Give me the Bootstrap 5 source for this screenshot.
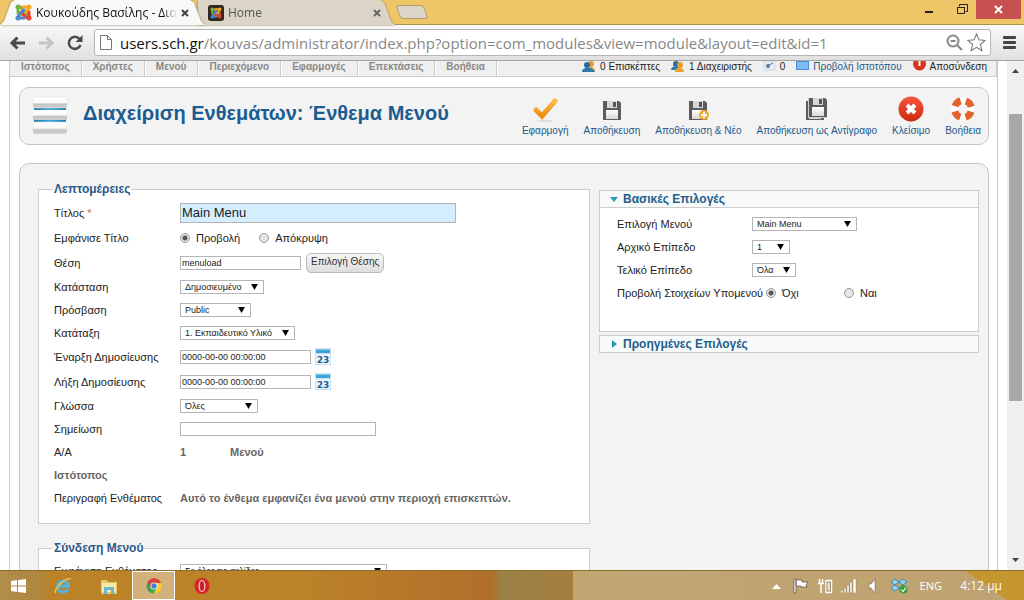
<!DOCTYPE html>
<html lang="el">
<head>
<meta charset="utf-8">
<meta name="viewport" content="width=device-width, initial-scale=1">
<title>Κουκούδης Βασίλης - Διαχείριση</title>
<link href="https://cdn.jsdelivr.net/npm/bootstrap@5.3.0/dist/css/bootstrap.min.css" rel="stylesheet">
<style>
body{font:11px/14px "Liberation Sans",Arial,sans-serif;color:#222;background:#fff}
svg{display:block;flex:none}
a{text-decoration:none;color:#1c5a8a}
.ui{font-family:"Open Sans","Noto Sans",sans-serif}
/* browser frame */
.tabstrip{background:#efc667;height:25px;border-bottom:1px solid #b0924f}
.tab{height:25px;filter:drop-shadow(0 0 1px #8a7a55)}
.tab>div{height:25px;font-size:12px;line-height:24px}
.tab-on{z-index:2}
.tab-on>div{background:#f9f9f9;width:205px;clip-path:polygon(0 100%,4px 85%,11px 10%,15px 0,190px 0,194px 10%,201px 85%,100% 100%);padding:0 16px 0 15px;color:#111}
.tab-off{margin-left:-7px}
.tab-off>div{background:#dad5c6;width:197px;clip-path:polygon(0 100%,0 0,182px 0,186px 10%,193px 85%,100% 100%);padding:0 14px 0 10px;color:#555}
.tabtitle{white-space:nowrap;-webkit-mask-image:linear-gradient(90deg,#000 90%,transparent)}
.xbtn,.winbtn{border:0;background:none;padding:0;line-height:1}
.newtab{width:28px;height:14px;background:#dad5c6;border:1px solid #b59f6b;border-radius:3px;transform:skewX(20deg);margin:5px 0 0 3px;padding:0}
.winclose{background:#c75050;width:45px;height:19px}
.toolbar{height:36px;background:linear-gradient(#f9f9f9,#e0e0e0);border-bottom:1px solid #a5a5a5;padding:0 8px 0 9px;gap:12px}
.omni{height:27px;background:#fff;border:1px solid #b5b5b5;border-radius:3px;padding:0 4px 0 5px;margin-left:-1px}
.url{font-size:15px;color:#888;white-space:nowrap}
.url b{font-weight:400;color:#111}
/* page */
.page{border:solid #ccc;border-width:0 1px;margin:0 9px}
.menubar{height:16px;background:#efefef;border-bottom:1px solid #ccc;border-right:1px solid #ccc}
.menubar nav a{font-size:10px;font-weight:700;color:#888;padding:0 11px 4px;line-height:11px;border-right:1px solid #ccc;box-shadow:1px 0 #fff}
.status{font-size:10px;line-height:11px;gap:11px;color:#222;padding:0 9px 4px 0}
.status>*{gap:4px;white-space:nowrap}
.panel{background:#f3f3f3;border:1px solid #c6c6c6;border-radius:10px}
.head{margin:10px 8px 0 9px;height:58px;padding:0 7px 0 10px}
.head h1{font-size:20px;line-height:24px;font-weight:700;color:#1c5c90;margin:0 0 6px 13px;white-space:nowrap}
.actions{gap:15px;font-size:10px;line-height:12px}
.actions a{gap:3px;white-space:nowrap}
.main{margin:18px 8px 0 9px;padding:18px 9px 0 18px;display:grid;grid-template-columns:minmax(0,552fr) minmax(0,380fr);gap:9px}
fieldset.box{border:1px solid #ccc;background:#fff;padding:4px 15px 14px;margin:0 0 17px}
.box legend{float:none;width:auto;font-size:12px;line-height:14px;font-weight:700;color:#2b5a8c;margin:0 0 0 -1px;padding:0 1px;background:linear-gradient(#f3f3f3 50%,#fff 50%)}
.line{display:flex;align-items:center;min-height:23px}
.line.tall{min-height:25px}
.line>label:first-child,.line>.lbl{width:126px;flex:none;white-space:nowrap;color:#222}
.strong{font-weight:700;color:#666}
.line input[type=text]{border:1px solid #b5b5b5;background:#fff;height:14px;padding:0 1px;font-size:9px;line-height:12px;color:#222}
.line input.title{background:#d5eeff;width:276px;height:20px;font-size:13px;line-height:18px}
.w-pos{width:121px}.w-date{width:131px}.w-note{width:196px}
.pick{font-size:10px;line-height:12px;border:1px solid #bbb;border-radius:5px;background:linear-gradient(#f7f7f7,#ddd);padding:2px 4px 4px;color:#333;margin-left:5px}
.line select{appearance:none;border:1px solid #b5b5b5;border-radius:0;height:14px;padding:0 4px;font-size:9px;line-height:12px;color:#222;background:#fff url("data:image/svg+xml,%3Csvg xmlns='http://www.w3.org/2000/svg' viewBox='0 0 8 7'%3E%3Cpath d='M0 0h8L4 7z'/%3E%3C/svg%3E") no-repeat right 5px center/7px 6px}
.s1{width:84px}.s2{width:71px}.s3{width:115px}.s4{width:78px}.s5{width:207px}.s6{width:105px}.s7{width:38px}.s8{width:44px}
input[type=radio]{appearance:none;width:10px;height:10px;border:1px solid #999;border-radius:50%;background:#e6e6e6;margin:0 6px 0 0;flex:none}
input[type=radio]:checked{background:radial-gradient(#555 0 2px,#e6e6e6 3px)}
.radiogap{margin-right:19px}
.opt{border:1px solid #ccc;background:#fff}
.opt+.opt{margin-top:3px}
.opt h3{font-size:12px;line-height:16px;font-weight:700;color:#1f5f8d;background:#f8f9f9;margin:0;padding:0 9px}
.opt h3 svg{margin-right:4px}
.optbody{border-top:1px solid #ccc;padding:4px 17px 27px}
.optbody .line>label:first-child{width:135px}
.optbody .line>.wide{width:149px;flex:none}
.scroll{width:17px;background:#f0f0f0}
.thumb{width:13px;height:287px;background:#a8a8a8;margin-top:41px}
/* taskbar */
.taskbar{height:30px;background:linear-gradient(90deg,#b18d4c 0,#ae873c 4%,#bb8228 5%,#bb8228 30%,#b4722b 45%,#b06f2c 48%,#9c8245 49%,#a57f40 56%,#c0a772 56%,#bfa272 100%);color:#fff;border-top:1px solid #8d6a2c}
.task{width:46px;height:29px;padding:0;border:0;background:none;display:flex;align-items:center;justify-content:center}
.task.start{width:37px;margin-right:3px}
.task.on{width:43px;border:1px solid #fff;background:#d2b17c}
.corner{background:linear-gradient(35deg,transparent 0 52%,#c5962f 53%);width:82px;font-size:12px;padding:0 22px 0 0}
</style>
</head>
<body class="vh-100 d-flex flex-column overflow-hidden">
<svg width="0" height="0" class="position-absolute">
<defs>
<g id="joomla" fill="none" stroke-width="3" stroke-linecap="round"><path d="M3 9V5a2 2 0 0 1 4 0l5 5" stroke="#7ab33e"/><path d="M8 3h4a2 2 0 0 1 1 3l-6 5" stroke="#f5a623"/><path d="M14 8v4a2 2 0 0 1-3 1L6 8" stroke="#e8402f"/><path d="M9 14H5a2 2 0 0 1-1-3l5-5" stroke="#4a86c9"/><circle cx="3" cy="3" r="1" stroke="#7ab33e"/><circle cx="14" cy="3" r="1" stroke="#f5a623"/><circle cx="3" cy="14" r="1" stroke="#4a86c9"/><circle cx="14" cy="14" r="1" stroke="#e8402f"/></g>
<linearGradient id="met" x1="0" y1="0" x2="0" y2="1"><stop offset="0" stop-color="#fff"/><stop offset=".5" stop-color="#f9f9f9"/><stop offset=".65" stop-color="#c4c4c4"/><stop offset="1" stop-color="#d0d0d0"/></linearGradient>
<linearGradient id="blu" x1="0" y1="0" x2="1" y2="0"><stop offset="0" stop-color="#1f78b0"/><stop offset=".5" stop-color="#3fa9d6"/><stop offset="1" stop-color="#1f78b0"/></linearGradient>
<linearGradient id="red" x1="0" y1="0" x2="0" y2="1"><stop offset="0" stop-color="#f9553c"/><stop offset="1" stop-color="#c92a10"/></linearGradient>
<linearGradient id="ora" x1="0" y1="0" x2="0" y2="1"><stop offset="0" stop-color="#fdb94a"/><stop offset="1" stop-color="#f08c14"/></linearGradient>
<linearGradient id="lab" x1="0" y1="0" x2="0" y2="1"><stop offset="0" stop-color="#fff"/><stop offset="1" stop-color="#d8d8d8"/></linearGradient>
<g id="disk"><path d="M1 0h16l2 2v17H1z" fill="#5c5c5c"/><path d="M5 0h10v7H5z" fill="#d6d6d6"/><path d="M11 1h3v5h-3z" fill="#555"/><path d="M4 9h12v9H4z" fill="url(#lab)"/></g>
<g id="people"><path d="M6 9c0-4 7-4 7 1z" fill="#e9a640"/><circle cx="9" cy="3" r="3" fill="#e99b30"/><circle cx="5" cy="4" r="3" fill="#286b9b"/><path d="M0 11c0-6 11-6 13 0z" fill="#2f78a8"/></g>
<g id="people2"><circle cx="5" cy="3" r="3" fill="#286b9b"/><path d="M0 9c0-5 9-5 9 0z" fill="#2f78a8"/><circle cx="9" cy="4" r="3" fill="#e99b30"/><path d="M4 11c0-6 9-5 9 0z" fill="#eba030"/></g>
<g id="cal"><path d="M0 0h16v17H0z" fill="#c9dfef"/><path d="M1 6h14v10H1z" fill="#edf6fb"/><path d="M1 1h14v4H1z" fill="#3aa3d8"/><path d="M1 1h14v1H1z" fill="#8acdec"/><text x="8" y="15" text-anchor="middle" font-family="DejaVu Sans" font-weight="bold" font-size="9" fill="#1d5f8e">23</text></g>
</defs></svg>

<header class="ui">
<div class="tabstrip d-flex align-items-start">
  <div class="tab tab-on position-relative"><div class="d-flex align-items-center">
    <svg width="17" height="17"><use href="#joomla"/></svg><span class="tabtitle ms-1">Κουκούδης Βασίλης - Δια</span>
    <button class="xbtn ms-auto" aria-label="Κλείσιμο καρτέλας"><svg width="8" height="8" stroke="#444" stroke-width="2"><path d="M1 1l6 6M7 1L1 7"/></svg></button>
  </div></div>
  <div class="tab tab-off"><div class="d-flex align-items-center">
    <svg width="16" height="16" viewBox="-3 -3 23 23"><rect x="-3" y="-3" width="23" height="23" rx="4" fill="#33281e"/><use href="#joomla"/></svg><span class="ms-1 flex-fill">Home</span>
    <button class="xbtn" aria-label="Κλείσιμο καρτέλας"><svg width="8" height="8" stroke="#666" stroke-width="2"><path d="M1 1l6 6M7 1L1 7"/></svg></button>
  </div></div>
  <button class="newtab" aria-label="Νέα καρτέλα"></button>
  <div class="ms-auto d-flex align-items-start">
    <button class="winbtn px-2 me-1" aria-label="Ελαχιστοποίηση"><svg width="8" height="14"><path d="M0 11h8v2H0z" fill="#222"/></svg></button>
    <button class="winbtn pt-1 px-2 ms-1" aria-label="Επαναφορά"><svg width="11" height="11" fill="none" stroke="#222"><path d="M2.500 2.500V.5h8v7h-2"/><path d="M.5 3.500h7v6h-7z"/><path d="M0 3.500h8"/></svg></button>
    <button class="winbtn winclose d-flex align-items-center justify-content-center" aria-label="Κλείσιμο" style="margin-right:3px"><svg width="9" height="9" stroke="#fff" stroke-width="2"><path d="M1 1l7 7M8 1L1 8"/></svg></button>
  </div>
</div>
<div class="toolbar d-flex align-items-center">
  <button class="xbtn" aria-label="Πίσω"><svg width="17" height="16" fill="none" stroke="#4a4a4a" stroke-width="3"><path d="M16 8H3M8.500 2.500L3 8l5.500 5.500"/></svg></button>
  <button class="xbtn" aria-label="Εμπρός"><svg width="17" height="16" fill="none" stroke="#c5c5c5" stroke-width="3"><path d="M1 8h13M8.500 2.500L14 8l-5.500 5.500"/></svg></button>
  <button class="xbtn" aria-label="Ανανέωση"><svg width="16" height="16"><path d="M12.500 4A6 6 0 1 0 13.500 10" fill="none" stroke="#4a4a4a" stroke-width="2.500"/><path d="M15.500 0v7h-7z" fill="#4a4a4a"/></svg></button>
  <div class="omni d-flex align-items-center flex-fill">
    <svg width="12" height="15" fill="#fff" stroke="#777"><path d="M.5.5h7l4 4v10H.5zM7.500.5v4h4"/></svg>
    <span class="url flex-fill ms-2"><b>users.sch.gr</b>/kouvas/administrator/index.php?option=com_modules&amp;view=module&amp;layout=edit&amp;id=1</span>
    <svg width="17" height="17" fill="none" stroke="#888" stroke-width="2"><circle cx="7" cy="7" r="5.500"/><path d="M11 11l5 5M4.500 7h5"/></svg>
    <svg class="ms-1" width="19" height="19" viewBox="0 0 18 18" fill="#fff" stroke="#777"><path d="M9 1l2.300 5.500 5.900.5-4.500 3.900 1.400 5.800L9 13.600l-5.100 3.100 1.400-5.800L.8 7l5.900-.5z"/></svg>
  </div>
  <button class="xbtn" aria-label="Μενού"><svg width="13" height="13" fill="#444"><rect width="13" height="3" rx="1"/><rect y="5" width="13" height="3" rx="1"/><rect y="10" width="13" height="3" rx="1"/></svg></button>
</div>
</header>

<div class="d-flex flex-fill overflow-hidden" style="min-height:0">
<div class="flex-fill overflow-hidden">
<div class="page">
  <div class="menubar d-flex align-items-start">
    <nav class="d-flex"><a href="#">Ιστότοπος</a><a href="#">Χρήστες</a><a href="#">Μενού</a><a href="#">Περιεχόμενο</a><a href="#">Εφαρμογές</a><a href="#">Επεκτάσεις</a><a href="#">Βοήθεια</a></nav>
    <div class="status d-flex ms-auto">
      <span class="d-flex align-items-center"><svg width="14" height="11"><use href="#people"/></svg>0 Επισκέπτες</span>
      <span class="d-flex align-items-center"><svg width="14" height="11"><use href="#people2"/></svg>1 Διαχειριστής</span>
      <span class="d-flex align-items-center"><svg width="13" height="11"><path d="M1 0h11v9H1z" fill="#e5ecf2" stroke="#cfd8e0"/><circle cx="5" cy="5" r="2" fill="#557a9b"/><path d="M6 4l4-2" stroke="#557a9b"/></svg>0</span>
      <a href="#" class="d-flex align-items-center"><svg width="13" height="11"><path d="M0 0h13v9H0z" fill="#4a90d9"/><path d="M1 1h11v7H1z" fill="#7cbaf2"/></svg>Προβολή Ιστοτόπου</a>
      <a href="#" class="d-flex align-items-center text-dark"><svg width="13" height="11"><circle cx="6.500" cy="3" r="6.500" fill="#d9341c"/><path d="M6.500 0v5" stroke="#fff" stroke-width="2"/></svg>Αποσύνδεση</a>
    </div>
  </div>

  <div class="panel head d-flex align-items-center">
    <svg width="40" height="42"><path d="M4 10h32v22H4z" fill="url(#blu)"/><rect x="3" y="2" width="34" height="11" rx="2" fill="url(#met)" stroke="#e2e2e2" stroke-width=".5"/><rect x="3" y="15" width="34" height="10" fill="url(#met)"/><rect x="3" y="27" width="34" height="12" rx="2" fill="url(#met)" stroke="#e2e2e2" stroke-width=".5"/></svg>
    <h1>Διαχείριση Ενθεμάτων: Ένθεμα Μενού</h1>
    <div class="actions d-flex ms-auto">
      <a href="#" class="d-flex flex-column align-items-center"><svg width="26" height="26"><ellipse cx="13" cy="25" rx="8" ry="1" fill="#ddd"/><path d="M4 14l6 6L23 5" fill="none" stroke="url(#ora)" stroke-width="5" stroke-linecap="round"/></svg>Εφαρμογή</a>
      <a href="#" class="d-flex flex-column align-items-center"><svg width="26" height="26"><use href="#disk" x="3" y="5"/></svg>Αποθήκευση</a>
      <a href="#" class="d-flex flex-column align-items-center"><svg width="26" height="26"><use href="#disk" x="3" y="5"/><circle cx="19" cy="19" r="5" fill="#f5a82f"/><path d="M19 16v6M16 19h6" stroke="#fff" stroke-width="2"/></svg>Αποθήκευση &amp; Νέο</a>
      <a href="#" class="d-flex flex-column align-items-center"><svg width="26" height="26"><use href="#disk" x="1" y="5"/><path d="M4 2h1v19h18v1H4z" fill="#ccc"/><use href="#disk" x="4" y="2"/></svg>Αποθήκευση ως Αντίγραφο</a>
      <a href="#" class="d-flex flex-column align-items-center"><svg width="26" height="26"><circle cx="13" cy="13" r="12.500" fill="url(#red)"/><path d="M9 9l8 8M17 9l-8 8" stroke="#fff" stroke-width="4"/></svg>Κλείσιμο</a>
      <a href="#" class="d-flex flex-column align-items-center"><svg width="26" height="26" fill="none"><circle cx="13" cy="13" r="8" stroke="#fff" stroke-width="8"/><circle cx="13" cy="13" r="8.500" stroke="#e2622b" stroke-width="7" stroke-dasharray="8 5.350" stroke-dashoffset="-2.680"/></svg>Βοήθεια</a>
    </div>
  </div>

  <form class="panel main">
    <div>
      <fieldset class="box"><legend>Λεπτομέρειες</legend>
        <div class="line tall"><label for="t">Τίτλος <span style="color:#e2622b">*</span></label><input id="t" class="title" type="text" value="Main Menu"></div>
        <div class="line tall"><span class="lbl">Εμφάνισε Τίτλο</span><input type="radio" name="show" id="r1" checked><label for="r1" class="radiogap">Προβολή</label><input type="radio" name="show" id="r2"><label for="r2">Απόκρυψη</label></div>
        <div class="line tall"><label for="p">Θέση</label><input id="p" class="w-pos" type="text" value="menuload"><button type="button" class="pick">Επιλογή Θέσης</button></div>
        <div class="line"><label for="a1">Κατάσταση</label><select id="a1" class="s1"><option>Δημοσιευμένο</option></select></div>
        <div class="line"><label for="a2">Πρόσβαση</label><select id="a2" class="s2"><option>Public</option></select></div>
        <div class="line"><label for="a3">Κατάταξη</label><select id="a3" class="s3"><option>1. Εκπαιδευτικό Υλικό</option></select></div>
        <div class="line tall"><label for="d1">Έναρξη Δημοσίευσης</label><input id="d1" class="w-date" type="text" value="0000-00-00 00:00:00"><svg class="ms-1" width="16" height="17"><use href="#cal"/></svg></div>
        <div class="line tall"><label for="d2">Λήξη Δημοσίευσης</label><input id="d2" class="w-date" type="text" value="0000-00-00 00:00:00"><svg class="ms-1" width="16" height="17"><use href="#cal"/></svg></div>
        <div class="line"><label for="a4">Γλώσσα</label><select id="a4" class="s4"><option>Όλες</option></select></div>
        <div class="line"><label for="n">Σημείωση</label><input id="n" class="w-note" type="text"></div>
        <div class="line"><span class="lbl">Α/Α</span><span class="strong" style="width:50px">1</span><span class="strong">Μενού</span></div>
        <div class="line strong">Ιστότοπος</div>
        <div class="line"><span class="lbl">Περιγραφή Ενθέματος</span><span class="strong">Αυτό το ένθεμα εμφανίζει ένα μενού στην περιοχή επισκεπτών.</span></div>
      </fieldset>
      <fieldset class="box"><legend>Σύνδεση Μενού</legend>
        <div class="line"><label for="a5">Εμφάνιση Ενθέματος</label><select id="a5" class="s5"><option>Σε όλες τις σελίδες</option></select></div>
      </fieldset>
    </div>
    <div class="pt-2">
      <section class="opt">
        <h3 class="d-flex align-items-center"><svg width="10" height="8"><path d="M1 2h8L5 7z" fill="#2a9bb5"/></svg>Βασικές Επιλογές</h3>
        <div class="optbody">
          <div class="line"><label for="b1">Επιλογή Μενού</label><select id="b1" class="s6"><option>Main Menu</option></select></div>
          <div class="line"><label for="b2">Αρχικό Επίπεδο</label><select id="b2" class="s7"><option>1</option></select></div>
          <div class="line"><label for="b3">Τελικό Επίπεδο</label><select id="b3" class="s8"><option>Όλα</option></select></div>
          <div class="line"><span class="wide">Προβολή Στοιχείων Υπομενού</span><input type="radio" name="sub" id="q1" checked><label for="q1" style="width:62px">Όχι</label><input type="radio" name="sub" id="q2"><label for="q2">Ναι</label></div>
        </div>
      </section>
      <section class="opt">
        <h3 class="d-flex align-items-center"><svg width="10" height="8"><path d="M3 0v8l5-4z" fill="#2a9bb5"/></svg>Προηγμένες Επιλογές</h3>
      </section>
    </div>
  </form>
</div>
</div>
<div class="scroll d-flex flex-column align-items-center justify-content-between py-2">
  <svg width="7" height="4"><path d="M0 4l3.500-4L7 4z" fill="#444"/></svg>
  <div class="thumb mb-auto"></div>
  <svg width="7" height="4"><path d="M0 0l3.500 4L7 0z" fill="#444"/></svg>
</div>
</div>

<footer class="taskbar ui d-flex">
  <button class="task start" aria-label="Έναρξη"><svg width="15" height="14" fill="#fff"><path d="M0 2l6-1v5.500H0zM7 1l8-1v6.500H7zM0 7.500h6V13l-6-1zM7 7.500h8V14l-8-1z"/></svg></button>
  <button class="task" aria-label="Internet Explorer"><svg width="18" height="18" fill="none"><path d="M14 12a5.500 5.500 0 1 1 .6-3H5" stroke="#4db5ea" stroke-width="3"/><path d="M2 16C-1 13 11 0 17 2" stroke="#e8c34a" stroke-width="1.500"/></svg></button>
  <button class="task" aria-label="Εξερεύνηση"><svg width="18" height="16"><path d="M1 2h6l1 2h9v12H1z" fill="#e6c865"/><path d="M2 5h14v9H2z" fill="#f7e8a8"/><path d="M4 16V9h10v7h-3v-4H7v4z" fill="#6ab5d8"/></svg></button>
  <button class="task on" aria-label="Chrome"><svg width="16" height="16"><circle cx="8" cy="8" r="7.500" fill="#3ba64c"/><path d="M1.500 4A7.500 7.500 0 0 1 15 5H8l-3 5z" fill="#dd4437"/><path d="M15 5A7.500 7.500 0 0 1 7.500 15.500L11 10 9 5z" fill="#fbcd2e"/><circle cx="8" cy="8" r="3.500" fill="#fff"/><circle cx="8" cy="8" r="2.700" fill="#3f7fd8"/></svg></button>
  <button class="task ms-1" aria-label="Opera"><svg width="16" height="16"><ellipse cx="8" cy="8" rx="7.500" ry="8" fill="#d6232b"/><ellipse cx="8" cy="8" rx="3.500" ry="6" fill="#f4dada"/><ellipse cx="8" cy="8" rx="2.300" ry="5" fill="#c9242b"/></svg></button>
  <div class="ms-auto d-flex align-items-center gap-2">
    <svg width="9" height="6" fill="#fff"><path d="M0 6l4.500-5L9 6z"/></svg>
    <svg class="ms-1" width="16" height="16" fill="#fff" stroke="#433" stroke-width=".6"><path d="M1 1h2v14H1zM3 2h6v2h6l-2 3 1 2H8V8H3z"/></svg>
    <svg width="16" height="16" fill="none" stroke="#fff"><path d="M2.500 1v4M5.500 1v4M1 5.500h6M4 6v9" stroke-width="1.500"/><rect x="9" y="2.500" width="5.500" height="12" fill="#e8e0d0" stroke="#fff" stroke-width="1.500"/><rect x="10" y="4" width="3.500" height="9" stroke="#7a684a" stroke-width=".7"/></svg>
    <svg width="16" height="14" fill="#fff" stroke="#7a684a" stroke-width=".4"><path d="M0 11h2v3H0zM3 9h2v5H3zM6 6h2v8H6zM9 3h2v11H9zM12 0h3v14h-3z"/></svg>
    <svg width="14" height="14"><path d="M4 5h2l4-5v14L6 9H4z" fill="#fff" stroke="#655" stroke-width=".5"/></svg>
    <svg class="ms-1" width="17" height="16" fill="#8fd2f7" stroke="#1f77b8" stroke-width=".7"><path d="M4 1l4 3-4 3-4-3zM12 1l4 3-4 3-4-3zM4 7l4 3-4 3-4-3zM12 7l4 3-4 3-4-3z"/><circle cx="12.500" cy="11.500" r="4" fill="#3c9c3a" stroke="none"/><path d="M10.500 11.500l1.500 2 3-4" stroke="#fff" fill="none" stroke-width="1.200"/></svg>
    <span class="ms-1">ENG</span>
  </div>
  <div class="corner d-flex align-items-center justify-content-end">4:12 μμ</div>
</footer>
<script src="https://cdn.jsdelivr.net/npm/bootstrap@5.3.0/dist/js/bootstrap.bundle.min.js"></script>
</body>
</html>
